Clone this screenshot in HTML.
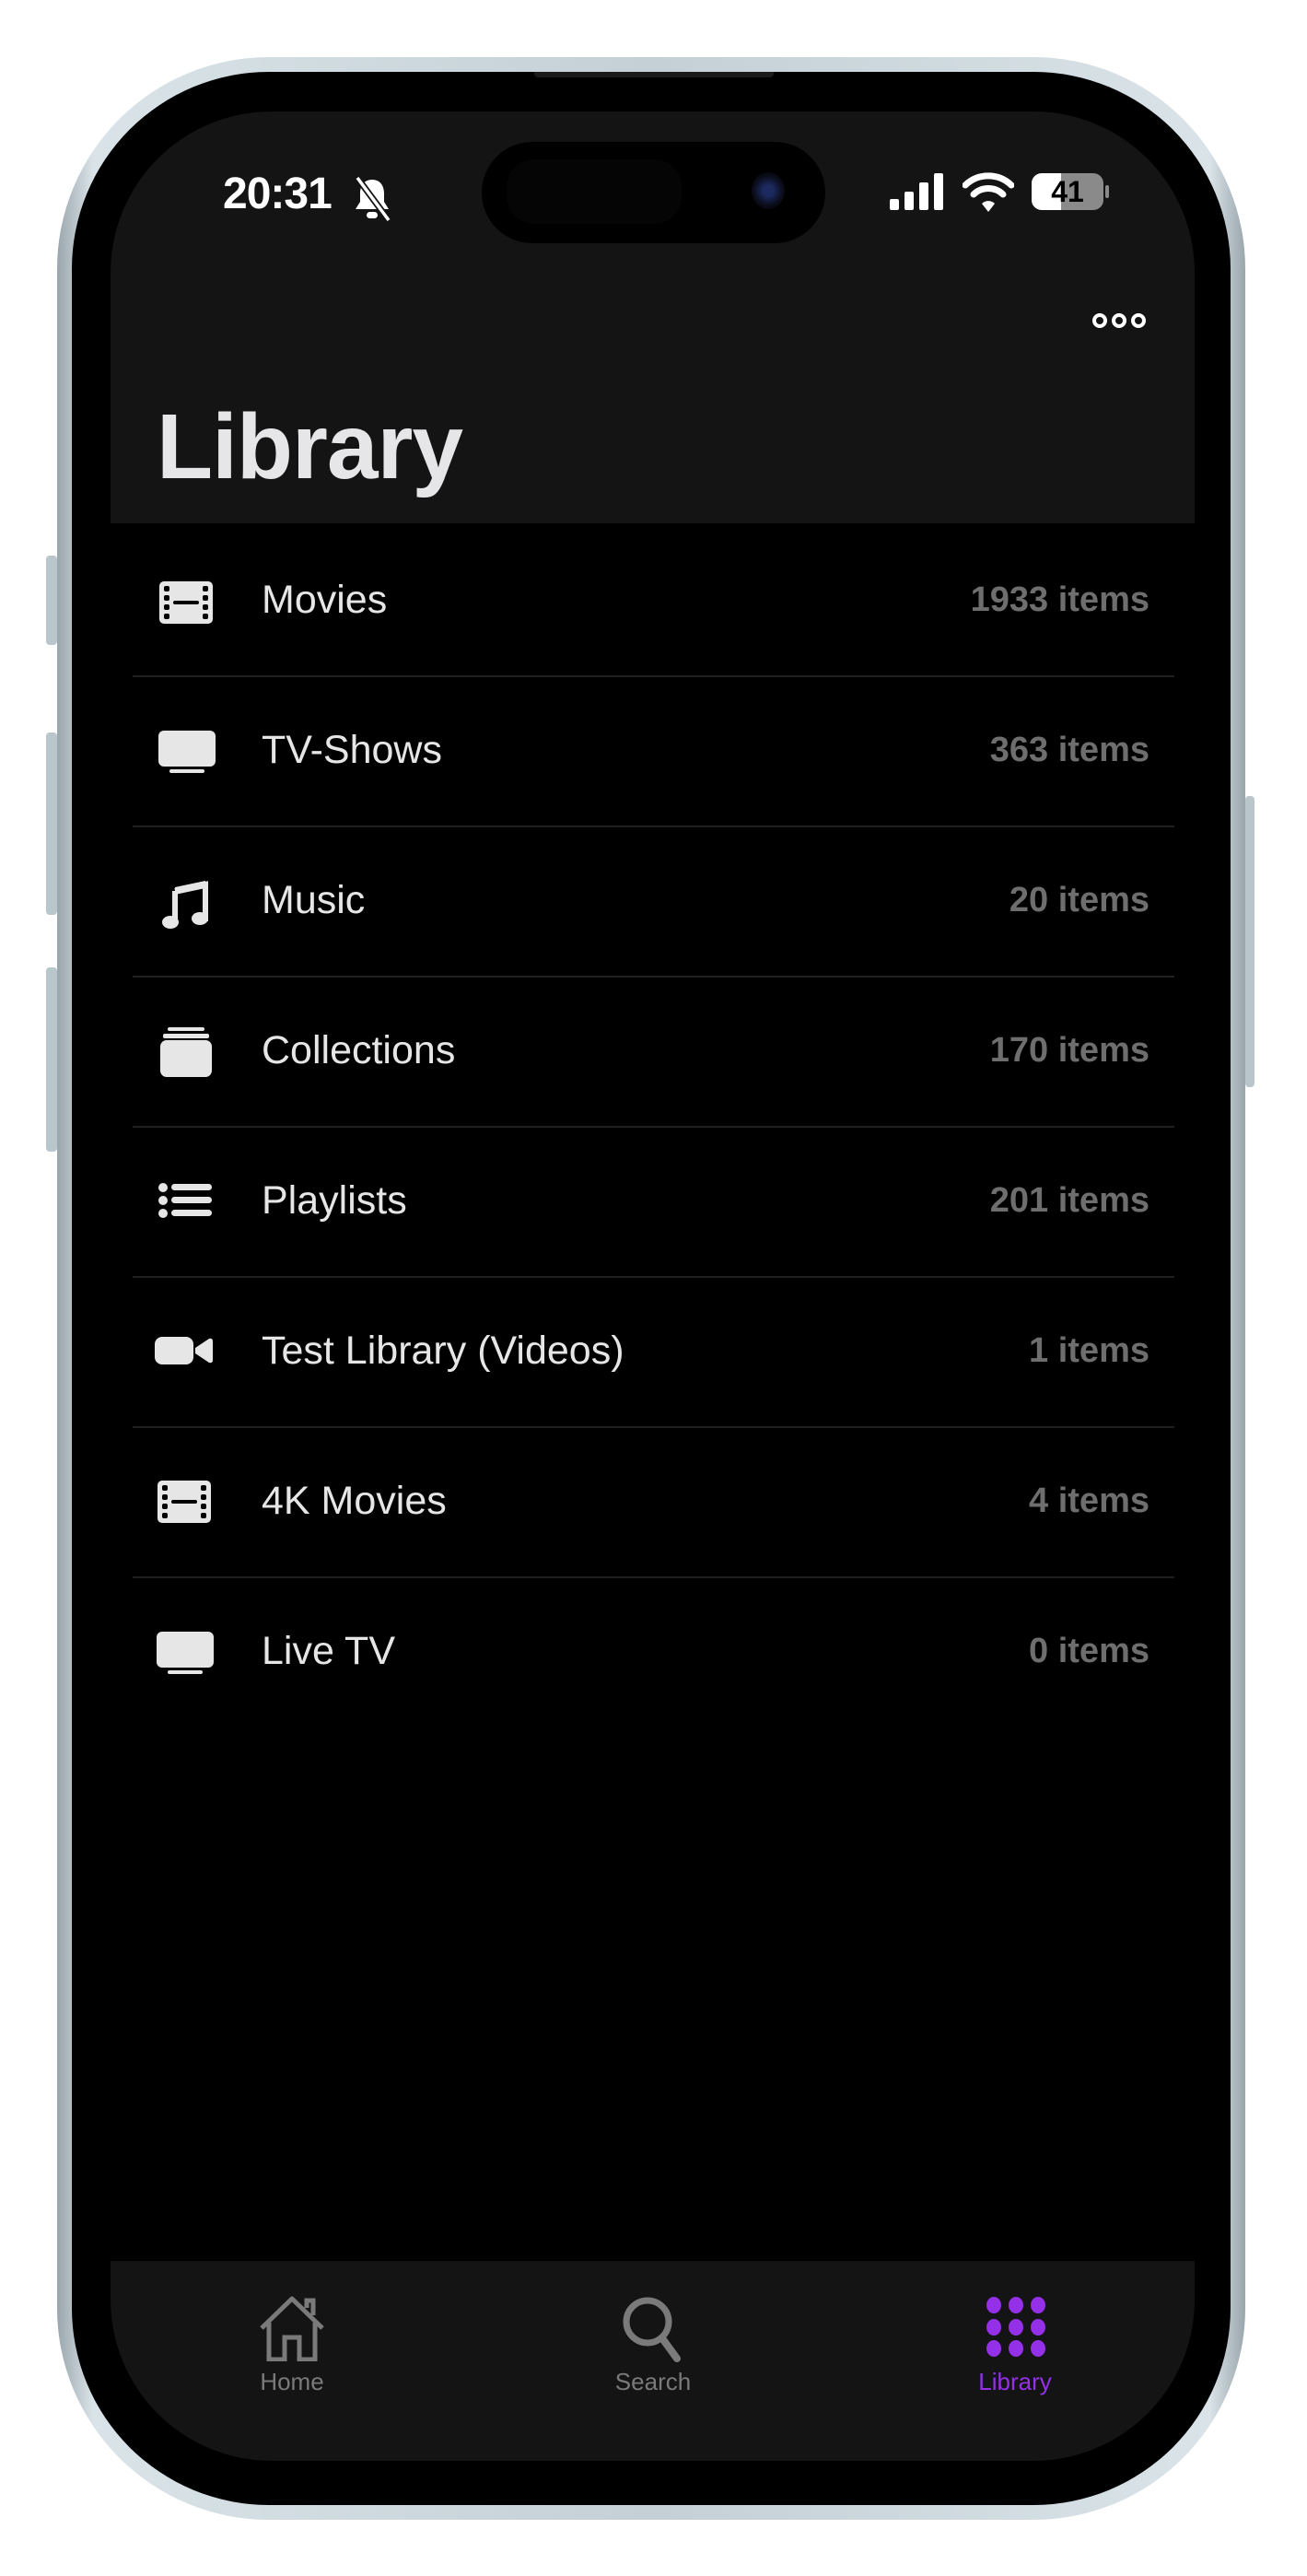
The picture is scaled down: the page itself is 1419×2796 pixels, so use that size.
<!DOCTYPE html>
<html><head><meta charset="utf-8"><style>
*{margin:0;padding:0;box-sizing:border-box}
body{width:1419px;height:2796px;background:#fff;position:relative;overflow:hidden;font-family:"Liberation Sans",sans-serif}
.abs{position:absolute}
.frame{left:62px;top:62px;width:1290px;height:2673px;border-radius:230px;background:linear-gradient(90deg,#9aa6ad,#d9e3e8 3%,#c4d0d6 50%,#d9e3e8 97%,#9aa6ad)}
.bezel{left:78px;top:78px;width:1258px;height:2641px;border-radius:214px;background:#000}
.screen{left:120px;top:121px;width:1177px;height:2550px;border-radius:175px;background:#000;overflow:hidden}
.hdr{left:0;top:0;width:1177px;height:447px;background:#141414}
.tab{left:0;top:2333px;width:1177px;height:220px;background:#141414}
.btn{background:#b9c6cc;border-radius:4px}
.row{position:absolute;left:0;width:1177px;height:163px}
.lbl{position:absolute;left:164px;top:0;line-height:163px;font-size:43px;color:#e6e6e6}
.cnt{position:absolute;right:49px;top:0;line-height:163px;font-size:38px;font-weight:bold;color:#6e6e6e}
.sep{position:absolute;left:24px;width:1131px;height:2px;background:#1f1f1f}
.ic{position:absolute;left:52px}
.tl{position:absolute;top:2449px;font-size:26px;color:#7a7a7a;transform:translateX(-50%)}
</style></head><body>
<div class="abs btn" style="left:50px;top:603px;width:12px;height:97px"></div>
<div class="abs btn" style="left:50px;top:795px;width:12px;height:198px"></div>
<div class="abs btn" style="left:50px;top:1050px;width:12px;height:200px"></div>
<div class="abs btn" style="left:1352px;top:864px;width:10px;height:316px"></div>
<div class="abs frame"></div>
<div class="abs bezel"></div>
<div class="abs screen">
 <div class="abs hdr"></div>
 <div class="abs" style="left:122px;top:62px;font-size:48px;font-weight:bold;color:#fff;letter-spacing:-1px">20:31</div>
 <svg class="abs" style="left:262px;top:70px" width="44" height="50" viewBox="0 0 44 50"><path d="M22 4c-9 0-13 7-13 15v9l-5 8h36l-5-8v-9c0-8-4-15-13-15z" fill="#fff"/><rect x="16" y="39" width="12" height="7" rx="3.5" fill="#fff"/><line x1="6" y1="2" x2="40" y2="48" stroke="#141414" stroke-width="7"/><line x1="6" y1="2" x2="40" y2="48" stroke="#fff" stroke-width="3.5"/></svg>
 <div class="abs" style="left:403px;top:33px;width:373px;height:110px;border-radius:55px;background:#000"></div>
 <div class="abs" style="left:430px;top:52px;width:190px;height:70px;border-radius:30px;background:#050505"></div>
 <div class="abs" style="left:696px;top:66px;width:36px;height:40px;border-radius:50%;background:radial-gradient(circle,#1c2a60 20%,#0a0c18 60%,#000)"></div>
 <svg class="abs" style="left:846px;top:67px" width="58" height="40"><rect x="0" y="28" width="10" height="12" rx="2" fill="#fff"/><rect x="16" y="20" width="10" height="20" rx="2" fill="#fff"/><rect x="32" y="10" width="10" height="30" rx="2" fill="#fff"/><rect x="48" y="0" width="10" height="40" rx="2" fill="#fff"/></svg>
 <svg class="abs" style="left:925px;top:66px" width="56" height="44" viewBox="0 0 56 44"><path d="M3 14a36 36 0 0 1 50 0" stroke="#fff" stroke-width="7" fill="none" stroke-linecap="round"/><path d="M12 24a23 23 0 0 1 32 0" stroke="#fff" stroke-width="7" fill="none" stroke-linecap="round"/><path d="M21 34a10 10 0 0 1 14 0l-7 9z" fill="#fff"/></svg>
 <div class="abs" style="left:1000px;top:67px;width:78px;height:40px;border-radius:11px;background:#8a8a8a;overflow:hidden"><div style="width:32px;height:40px;background:#fff"></div></div>
 <div class="abs" style="left:1080px;top:80px;width:4px;height:14px;border-radius:2px;background:#8a8a8a"></div>
 <div class="abs" style="left:1000px;top:67px;width:78px;line-height:40px;text-align:center;font-size:32px;font-weight:bold;color:#000">41</div>
 <svg class="abs" style="left:1064px;top:216px" width="62" height="22"><circle cx="10" cy="11" r="6" fill="none" stroke="#fff" stroke-width="4"/><circle cx="31" cy="11" r="6" fill="none" stroke="#fff" stroke-width="4"/><circle cx="52" cy="11" r="6" fill="none" stroke="#fff" stroke-width="4"/></svg>
 <div class="abs" style="left:50px;top:299px;font-size:100px;font-weight:bold;color:#e6e6e8;letter-spacing:-1px;line-height:130px">Library</div>

 <div class="row" style="top:449px"><svg class="ic" style="top:61px" width="60" height="46" viewBox="0 0 60 46"><rect x="1" y="0" width="58" height="46" rx="5" fill="#e6e6e6"/><g fill="#000"><rect x="6" y="5" width="6" height="6" rx="2"/><rect x="6" y="15" width="6" height="6" rx="2"/><rect x="6" y="25" width="6" height="6" rx="2"/><rect x="6" y="35" width="6" height="6" rx="2"/><rect x="48" y="5" width="6" height="6" rx="2"/><rect x="48" y="15" width="6" height="6" rx="2"/><rect x="48" y="25" width="6" height="6" rx="2"/><rect x="48" y="35" width="6" height="6" rx="2"/><rect x="16" y="21" width="28" height="4" rx="2"/></g></svg><div class="lbl">Movies</div><div class="cnt">1933 items</div></div>
 <div class="sep" style="top:612px"></div>
 <div class="row" style="top:612px"><svg class="ic" style="top:60px" width="64" height="46"><rect x="0" y="0" width="62" height="39" rx="6" fill="#e6e6e6"/><rect x="12" y="42" width="38" height="4" rx="2" fill="#e6e6e6"/></svg><div class="lbl">TV-Shows</div><div class="cnt">363 items</div></div>
 <div class="sep" style="top:775px"></div>
 <div class="row" style="top:775px"><svg class="ic" style="top:53px" width="60" height="60" viewBox="0 0 60 60"><path d="M18 18l33-7v40" stroke="#e6e6e6" stroke-width="6" fill="none"/><path d="M18 18v35" stroke="#e6e6e6" stroke-width="6"/><ellipse cx="13" cy="52" rx="9" ry="7" fill="#e6e6e6"/><ellipse cx="45" cy="48" rx="9" ry="7" fill="#e6e6e6"/><path d="M18 14l33-7v8l-33 7z" fill="#e6e6e6"/></svg><div class="lbl">Music</div><div class="cnt">20 items</div></div>
 <div class="sep" style="top:938px"></div>
 <div class="row" style="top:938px"><svg class="ic" style="top:56px" width="60" height="54"><rect x="10" y="0" width="40" height="4" rx="2" fill="#e6e6e6"/><rect x="5" y="7" width="50" height="5" rx="2" fill="#e6e6e6"/><rect x="2" y="14" width="56" height="40" rx="7" fill="#e6e6e6"/></svg><div class="lbl">Collections</div><div class="cnt">170 items</div></div>
 <div class="sep" style="top:1101px"></div>
 <div class="row" style="top:1101px"><svg class="ic" style="top:62px" width="60" height="42"><circle cx="5" cy="5" r="5" fill="#e6e6e6"/><circle cx="5" cy="19" r="5" fill="#e6e6e6"/><circle cx="5" cy="33" r="5" fill="#e6e6e6"/><rect x="14" y="1" width="44" height="7" rx="3.5" fill="#e6e6e6"/><rect x="14" y="15" width="44" height="7" rx="3.5" fill="#e6e6e6"/><rect x="14" y="29" width="44" height="7" rx="3.5" fill="#e6e6e6"/></svg><div class="lbl">Playlists</div><div class="cnt">201 items</div></div>
 <div class="sep" style="top:1264px"></div>
 <div class="row" style="top:1264px"><svg class="ic" style="top:66px;left:48px" width="64" height="30"><rect x="0" y="0" width="42" height="30" rx="8" fill="#e6e6e6"/><path d="M44 12l15-10q4-1 4 3v20q0 4-4 3l-15-10z" fill="#e6e6e6"/></svg><div class="lbl">Test Library (Videos)</div><div class="cnt">1 items</div></div>
 <div class="sep" style="top:1427px"></div>
 <div class="row" style="top:1427px"><svg class="ic" style="top:59px;left:50px" width="60" height="46" viewBox="0 0 60 46"><rect x="1" y="0" width="58" height="46" rx="5" fill="#e6e6e6"/><g fill="#000"><rect x="6" y="5" width="6" height="6" rx="2"/><rect x="6" y="15" width="6" height="6" rx="2"/><rect x="6" y="25" width="6" height="6" rx="2"/><rect x="6" y="35" width="6" height="6" rx="2"/><rect x="48" y="5" width="6" height="6" rx="2"/><rect x="48" y="15" width="6" height="6" rx="2"/><rect x="48" y="25" width="6" height="6" rx="2"/><rect x="48" y="35" width="6" height="6" rx="2"/><rect x="16" y="21" width="28" height="4" rx="2"/></g></svg><div class="lbl">4K Movies</div><div class="cnt">4 items</div></div>
 <div class="sep" style="top:1590px"></div>
 <div class="row" style="top:1590px"><svg class="ic" style="top:60px;left:50px" width="64" height="46"><rect x="0" y="0" width="62" height="39" rx="6" fill="#e6e6e6"/><rect x="12" y="42" width="38" height="4" rx="2" fill="#e6e6e6"/></svg><div class="lbl">Live TV</div><div class="cnt">0 items</div></div>

 <div class="abs tab"></div>
 <svg class="abs" style="left:160px;top:2370px" width="74" height="72" viewBox="0 0 74 72"><path d="M4 36L37 4l33 32" stroke="#7a7a7a" stroke-width="5" fill="none" stroke-linejoin="round"/><path d="M12 30v40h17V46h16v24h17V30" stroke="#7a7a7a" stroke-width="5" fill="none"/><path d="M53 14V6h7v16" stroke="#7a7a7a" stroke-width="5" fill="none"/></svg>
 <div class="tl" style="left:197px">Home</div>
 <svg class="abs" style="left:556px;top:2371px" width="66" height="72" viewBox="0 0 66 72"><circle cx="27" cy="28" r="23" stroke="#7a7a7a" stroke-width="7" fill="none"/><path d="M43 46l16 22" stroke="#7a7a7a" stroke-width="8" stroke-linecap="round"/></svg>
 <div class="tl" style="left:589px">Search</div>
 <svg class="abs" style="left:948px;top:2370px" width="70" height="70"><g fill="#9330e8"><ellipse cx="11" cy="11" rx="8" ry="9"/><ellipse cx="35" cy="11" rx="8" ry="9"/><ellipse cx="59" cy="11" rx="8" ry="9"/><ellipse cx="11" cy="35" rx="8" ry="9"/><ellipse cx="35" cy="35" rx="8" ry="9"/><ellipse cx="59" cy="35" rx="8" ry="9"/><ellipse cx="11" cy="58" rx="8" ry="9"/><ellipse cx="35" cy="58" rx="8" ry="9"/><ellipse cx="59" cy="58" rx="8" ry="9"/></g></svg>
 <div class="tl" style="left:982px;color:#9330e8">Library</div>
</div>
<div class="abs" style="left:580px;top:78px;width:260px;height:6px;border-radius:0 0 4px 4px;background:#1a1a1a"></div>
</body></html>
